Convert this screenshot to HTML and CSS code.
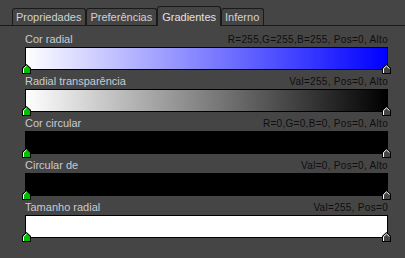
FILE: index.html
```html
<!DOCTYPE html>
<html>
<head>
<meta charset="utf-8">
<link rel="stylesheet" href="styles.css">
</head>
<body>
<div class="tabbar">
  <div class="tab">Propriedades</div>
  <div class="tab">Preferências</div>
  <div class="tab active">Gradientes</div>
  <div class="tab">Inferno</div>
</div>
<div class="rows">
  <div class="row">
    <div class="label"><span class="name">Cor radial</span><span class="value">R=255,G=255,B=255, Pos=0, Alto</span></div>
    <div class="bar grad-blue">
      <svg class="marker left" viewBox="0 0 9 10" width="9" height="10"><path d="M0 10V4L4.5 0L9 4V10Z" fill="#000"/><path d="M1 9V4.4L4.5 1.3L8 4.4V9Z" fill="#00c000"/><path d="M1.5 9V4.6L4.5 1.9" stroke="#fff" fill="none"/></svg>
      <svg class="marker right" viewBox="0 0 9 10" width="9" height="10"><path d="M0 10V4L4.5 0L9 4V10Z" fill="#000"/><path d="M1 9V4.4L4.5 1.3L8 4.4V9Z" fill="#454545"/><path d="M1.5 9V4.6L4.5 1.9L7.5 4.6" stroke="#fff" fill="none"/></svg>
    </div>
  </div>
  <div class="row">
    <div class="label"><span class="name">Radial transparência</span><span class="value">Val=255, Pos=0, Alto</span></div>
    <div class="bar grad-gray">
      <svg class="marker left" viewBox="0 0 9 10" width="9" height="10"><path d="M0 10V4L4.5 0L9 4V10Z" fill="#000"/><path d="M1 9V4.4L4.5 1.3L8 4.4V9Z" fill="#00c000"/><path d="M1.5 9V4.6L4.5 1.9" stroke="#fff" fill="none"/></svg>
      <svg class="marker right" viewBox="0 0 9 10" width="9" height="10"><path d="M0 10V4L4.5 0L9 4V10Z" fill="#000"/><path d="M1 9V4.4L4.5 1.3L8 4.4V9Z" fill="#454545"/><path d="M1.5 9V4.6L4.5 1.9L7.5 4.6" stroke="#fff" fill="none"/></svg>
    </div>
  </div>
  <div class="row">
    <div class="label"><span class="name">Cor circular</span><span class="value">R=0,G=0,B=0, Pos=0, Alto</span></div>
    <div class="bar solid-black">
      <svg class="marker left" viewBox="0 0 9 10" width="9" height="10"><path d="M0 10V4L4.5 0L9 4V10Z" fill="#000"/><path d="M1 9V4.4L4.5 1.3L8 4.4V9Z" fill="#00c000"/><path d="M1.5 9V4.6L4.5 1.9" stroke="#fff" fill="none"/></svg>
      <svg class="marker right" viewBox="0 0 9 10" width="9" height="10"><path d="M0 10V4L4.5 0L9 4V10Z" fill="#000"/><path d="M1 9V4.4L4.5 1.3L8 4.4V9Z" fill="#454545"/><path d="M1.5 9V4.6L4.5 1.9L7.5 4.6" stroke="#fff" fill="none"/></svg>
    </div>
  </div>
  <div class="row">
    <div class="label"><span class="name">Circular de</span><span class="value">Val=0, Pos=0, Alto</span></div>
    <div class="bar solid-black">
      <svg class="marker left" viewBox="0 0 9 10" width="9" height="10"><path d="M0 10V4L4.5 0L9 4V10Z" fill="#000"/><path d="M1 9V4.4L4.5 1.3L8 4.4V9Z" fill="#00c000"/><path d="M1.5 9V4.6L4.5 1.9" stroke="#fff" fill="none"/></svg>
      <svg class="marker right" viewBox="0 0 9 10" width="9" height="10"><path d="M0 10V4L4.5 0L9 4V10Z" fill="#000"/><path d="M1 9V4.4L4.5 1.3L8 4.4V9Z" fill="#454545"/><path d="M1.5 9V4.6L4.5 1.9L7.5 4.6" stroke="#fff" fill="none"/></svg>
    </div>
  </div>
  <div class="row">
    <div class="label"><span class="name">Tamanho radial</span><span class="value">Val=255, Pos=0</span></div>
    <div class="bar solid-white">
      <svg class="marker left" viewBox="0 0 9 10" width="9" height="10"><path d="M0 10V4L4.5 0L9 4V10Z" fill="#000"/><path d="M1 9V4.4L4.5 1.3L8 4.4V9Z" fill="#00c000"/><path d="M1.5 9V4.6L4.5 1.9" stroke="#fff" fill="none"/></svg>
      <svg class="marker right" viewBox="0 0 9 10" width="9" height="10"><path d="M0 10V4L4.5 0L9 4V10Z" fill="#000"/><path d="M1 9V4.4L4.5 1.3L8 4.4V9Z" fill="#454545"/><path d="M1.5 9V4.6L4.5 1.9L7.5 4.6" stroke="#fff" fill="none"/></svg>
    </div>
  </div>
</div>
</body>
</html>
```
FILE: styles.css
```css
html, body {
  margin: 0;
  padding: 0;
  background: #454545;
  width: 405px;
  height: 258px;
  overflow: hidden;
  font-family: "Liberation Sans", Arial, sans-serif;
}

.tabbar {
  display: flex;
  align-items: flex-end;
  height: 25px;
  box-sizing: content-box;
  padding: 0 3px 0 12px;
  border-bottom: 1px solid #1a1a1a;
}

.tab {
  font-size: 11px;
  line-height: 16px;
  padding: 0 4px 0 3px;
  color: #d2d2d2;
  border: 1px solid #1a1a1a;
  border-bottom: none;
  border-radius: 3px 3px 0 0;
  background: #454545;
}

.tab.active {
  padding: 2px 4px 1px;
  margin-bottom: -1px;
  color: #e2e2e2;
  position: relative;
  z-index: 1;
}

.rows {
  padding: 2px 17px 0 25px;
  display: flex;
  flex-direction: column;
}

.label {
  height: 19px;
  display: flex;
  align-items: flex-end;
  justify-content: space-between;
  padding-bottom: 1px;
  box-sizing: border-box;
}

.name {
  font-size: 11px;
  line-height: 13px;
  color: #c8cbd2;
}

.value {
  font-size: 10px;
  line-height: 13px;
  letter-spacing: 0.3px;
  color: #0e0e0e;
}

.bar {
  height: 23px;
  box-sizing: border-box;
  border: 1px solid #000;
  position: relative;
}

.grad-blue { background: linear-gradient(to right, #ffffff, #0000ff); }
.grad-gray { background: linear-gradient(to right, #ffffff, #000000); }
.solid-black { background: #000; }
.solid-white { background: #fff; }

.marker {
  position: absolute;
  top: 16px;
  display: block;
}
.marker.left { left: -4px; }
.marker.right { right: -4px; }
```
